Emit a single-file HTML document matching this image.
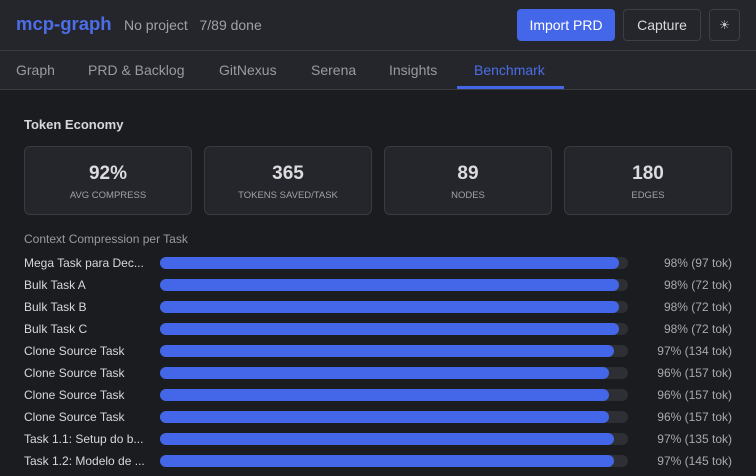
<!DOCTYPE html><html><head><style>
body{margin:0;width:756px;height:469px;overflow:hidden;background:#1b1c20;font-family:"Liberation Sans",sans-serif;position:relative}
.hdr{position:absolute;left:0;top:0;width:756px;height:50px;background:#25262b;border-bottom:1px solid #3a3b40}
.tabs{position:absolute;left:0;top:51px;width:756px;height:38px;background:#25262b;border-bottom:1px solid #3a3b40}
.t{position:absolute;top:11px;font-size:14px;color:#9a9ba0}
.abs{position:absolute}
.card{position:absolute;top:146px;width:166px;height:67px;border:1px solid #3a3b40;border-radius:6px;background:#25262b;text-align:center}
.card b{display:block;margin-top:16px;font-size:19px;color:#dcdcdf}
.card span{display:block;margin-top:5px;font-size:9.5px;color:#a0a1a6}
.row{position:absolute;left:0;width:756px;height:22px}
.row .l{position:absolute;left:24px;top:0;font-size:12px;color:#d8d8db}
.row .tr{position:absolute;left:160px;top:1px;width:468px;height:12px;border-radius:6px;background:#2e2f35}
.row .f{position:absolute;left:0;top:0;height:12px;border-radius:6px;background:#4466e8}
.row .p{position:absolute;right:24px;top:0;font-size:12px;color:#a8a9ae}
</style></head><body>
<div class="hdr">
<div class="abs" style="left:16px;top:13px;font-size:18.5px;font-weight:bold;color:#4b6ee8">mcp-graph</div>
<div class="abs" style="left:124px;top:17px;font-size:14px;color:#a0a1a6">No project&nbsp;&nbsp;&nbsp;7/89 done</div>
<div class="abs" style="left:517px;top:9px;width:98px;height:32px;border-radius:4px;background:#4466e8;color:#fff;font-size:14px;text-align:center;line-height:32px">Import PRD</div>
<div class="abs" style="left:623px;top:9px;width:76px;height:30px;border:1px solid #3e3f44;border-radius:4px;color:#d8d8db;font-size:14px;text-align:center;line-height:30px">Capture</div>
<div class="abs" style="left:709px;top:9px;width:29px;height:30px;border:1px solid #3e3f44;border-radius:4px;color:#c8c8cc;font-size:12px;text-align:center;line-height:30px">☀</div>
</div>
<div class="tabs">
<div class="t" style="left:16px">Graph</div>
<div class="t" style="left:88px">PRD &amp; Backlog</div>
<div class="t" style="left:219px">GitNexus</div>
<div class="t" style="left:311px">Serena</div>
<div class="t" style="left:389px">Insights</div>
<div class="t" style="left:474px;color:#4b6ee8">Benchmark</div>
<div class="abs" style="left:457px;top:35px;width:107px;height:3px;background:#4466e8"></div>
</div>
<div class="abs" style="left:24px;top:117px;font-size:13px;font-weight:bold;color:#d8d8db">Token Economy</div>
<div class="card" style="left:24px"><b>92%</b><span>AVG COMPRESS</span></div>
<div class="card" style="left:204px"><b>365</b><span>TOKENS SAVED/TASK</span></div>
<div class="card" style="left:384px"><b>89</b><span>NODES</span></div>
<div class="card" style="left:564px"><b>180</b><span>EDGES</span></div>
<div class="abs" style="left:24px;top:232px;font-size:12px;color:#9a9ba0">Context Compression per Task</div>
<div class="row" style="top:256px"><div class="l">Mega Task para Dec...</div><div class="tr"><div class="f" style="width:459px"></div></div><div class="p">98% (97 tok)</div></div>
<div class="row" style="top:278px"><div class="l">Bulk Task A</div><div class="tr"><div class="f" style="width:459px"></div></div><div class="p">98% (72 tok)</div></div>
<div class="row" style="top:300px"><div class="l">Bulk Task B</div><div class="tr"><div class="f" style="width:459px"></div></div><div class="p">98% (72 tok)</div></div>
<div class="row" style="top:322px"><div class="l">Bulk Task C</div><div class="tr"><div class="f" style="width:459px"></div></div><div class="p">98% (72 tok)</div></div>
<div class="row" style="top:344px"><div class="l">Clone Source Task</div><div class="tr"><div class="f" style="width:454px"></div></div><div class="p">97% (134 tok)</div></div>
<div class="row" style="top:366px"><div class="l">Clone Source Task</div><div class="tr"><div class="f" style="width:449px"></div></div><div class="p">96% (157 tok)</div></div>
<div class="row" style="top:388px"><div class="l">Clone Source Task</div><div class="tr"><div class="f" style="width:449px"></div></div><div class="p">96% (157 tok)</div></div>
<div class="row" style="top:410px"><div class="l">Clone Source Task</div><div class="tr"><div class="f" style="width:449px"></div></div><div class="p">96% (157 tok)</div></div>
<div class="row" style="top:432px"><div class="l">Task 1.1: Setup do b...</div><div class="tr"><div class="f" style="width:454px"></div></div><div class="p">97% (135 tok)</div></div>
<div class="row" style="top:454px"><div class="l">Task 1.2: Modelo de ...</div><div class="tr"><div class="f" style="width:454px"></div></div><div class="p">97% (145 tok)</div></div>
</body></html>
